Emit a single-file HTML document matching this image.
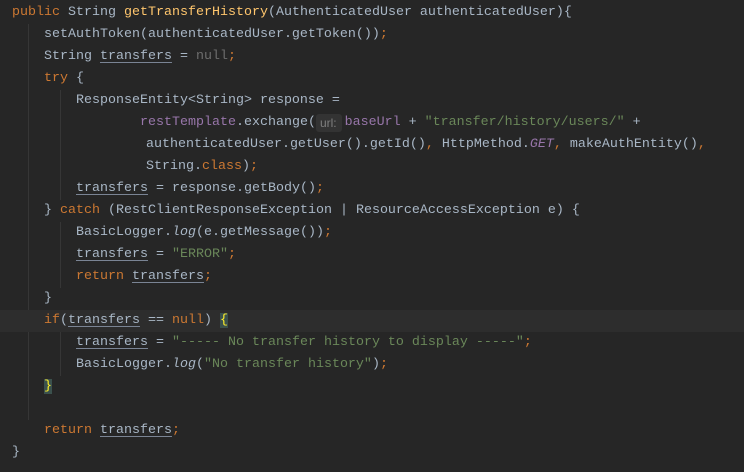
<!DOCTYPE html><html><head><style>
html,body{margin:0;padding:0;background:#262626;width:744px;height:472px;overflow:hidden}
pre{margin:0;padding-top:2px;font-family:"Liberation Mono","DejaVu Sans Mono",monospace;font-size:13.33px;line-height:22px;color:#a9b7c6;position:relative}
.l{display:block;height:22px;white-space:pre;padding-left:12px;position:relative;overflow:hidden}
.k{color:#cc7832}.m{color:#ffc66d}.s{color:#6a8759}.p{color:#9876aa}.i{font-style:italic}.n{color:#6d6d6d}
.u{text-decoration:underline;text-decoration-color:#7a8494;text-underline-offset:3px}
.hl{background:#2d2d2d}
.h{display:inline-block;height:18px;line-height:18px;vertical-align:top;margin-top:2px;background:#333;color:#7f7f7f;border-radius:3px;padding:0 5px 0 4px;font-family:"Liberation Sans",sans-serif;font-size:12px;margin-right:3px}
.b{background:#3b514d;color:#ffef28}
.g{position:absolute;width:1px;background:#363636}
</style></head><body>
<div class="g" style="left:28px;top:24px;height:396px"></div>
<div class="g" style="left:60px;top:90px;height:110px"></div>
<div class="g" style="left:60px;top:222px;height:66px"></div>
<div class="g" style="left:60px;top:332px;height:44px"></div>
<pre><span class="l"><span class="k">public </span>String <span class="m">getTransferHistory</span>(AuthenticatedUser authenticatedUser){</span><span class="l">    setAuthToken(authenticatedUser.getToken())<span class="k">;</span></span><span class="l">    String <span class="u">transfers</span> = <span class="n">null</span><span class="k">;</span></span><span class="l">    <span class="k">try </span>{</span><span class="l">        ResponseEntity&lt;String&gt; response =</span><span class="l">                <span class="p">restTemplate</span>.exchange(<span class="h">url:</span><span class="p">baseUrl</span> + <span class="s">"transfer/history/users/"</span> +</span><span class="l" style="padding-left:18px">                authenticatedUser.getUser().getId()<span class="k">, </span>HttpMethod.<span class="p i">GET</span><span class="k">, </span>makeAuthEntity()<span class="k">,</span></span><span class="l" style="padding-left:18px">                String.<span class="k">class</span>)<span class="k">;</span></span><span class="l">        <span class="u">transfers</span> = response.getBody()<span class="k">;</span></span><span class="l">    } <span class="k">catch </span>(RestClientResponseException | ResourceAccessException e) {</span><span class="l">        BasicLogger.<span class="i">log</span>(e.getMessage())<span class="k">;</span></span><span class="l">        <span class="u">transfers</span> = <span class="s">"ERROR"</span><span class="k">;</span></span><span class="l">        <span class="k">return </span><span class="u">transfers</span><span class="k">;</span></span><span class="l">    }</span><span class="l hl">    <span class="k">if</span>(<span class="u">transfers</span> == <span class="k">null</span>) <span class="b">{</span></span><span class="l">        <span class="u">transfers</span> = <span class="s">"----- No transfer history to display -----"</span><span class="k">;</span></span><span class="l">        BasicLogger.<span class="i">log</span>(<span class="s">"No transfer history"</span>)<span class="k">;</span></span><span class="l">    <span class="b">}</span></span><span class="l"> </span><span class="l">    <span class="k">return </span><span class="u">transfers</span><span class="k">;</span></span><span class="l">}</span></pre>
</body></html>
